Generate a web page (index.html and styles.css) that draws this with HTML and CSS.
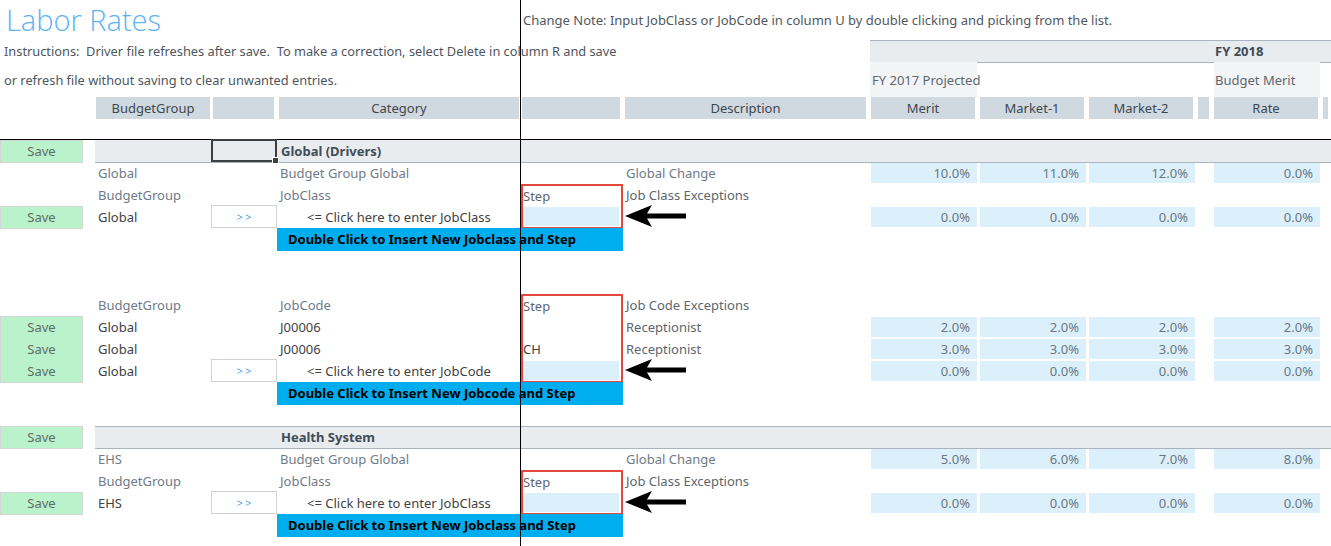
FILE: index.html
```html
<!DOCTYPE html>
<html>
<head>
  <title>Labor Rates</title>
  <link rel="stylesheet" href="styles.css">
</head>
<body>
  <div class="sheet">
    <div class="row r-title">
      <h1 class="title">Labor Rates</h1>
      <div class="change-note">Change Note: Input JobClass or JobCode in column U by double clicking and picking from the list.</div>
    </div>

    <div class="row">
      <div class="note">Instructions:&nbsp; Driver file refreshes after save.&nbsp; To make a correction, select Delete in column R and save</div>
      <div class="fy-band"></div>
      <div class="c-rate fy">FY 2018</div>
    </div>

    <div class="row r-sub">
      <div class="note">or refresh file without saving to clear unwanted entries.</div>
      <div class="c-merit sub-cell">FY 2017 Projected</div>
      <div class="c-rate sub-cell">Budget Merit</div>
    </div>

    <div class="row head">
      <div class="c-grp hd">BudgetGroup</div>
      <div class="c-go hd"></div>
      <div class="c-cat hd">Category</div>
      <div class="c-step hd"></div>
      <div class="c-desc hd">Description</div>
      <div class="c-merit hd">Merit</div>
      <div class="c-m1 hd">Market-1</div>
      <div class="c-m2 hd">Market-2</div>
      <div class="c-gap hd"></div>
      <div class="c-rate hd">Rate</div>
      <div class="c-end hd"></div>
    </div>
    <div class="freeze-h"></div>

    <!-- Global (Drivers) -->
    <div class="row">
      <div class="c-save save">Save</div>
      <div class="band"></div>
      <div class="c-go sel"></div>
      <div class="c-cat band-title">Global (Drivers)</div>
    </div>
    <div class="row">
      <div class="c-grp txt lt">Global</div>
      <div class="c-cat txt lt">Budget Group Global</div>
      <div class="c-desc txt lt">Global Change</div>
      <div class="c-merit pct">10.0%</div>
      <div class="c-m1 pct">11.0%</div>
      <div class="c-m2 pct">12.0%</div>
      <div class="c-rate pct">0.0%</div>
    </div>
    <div class="row">
      <div class="c-grp txt lt">BudgetGroup</div>
      <div class="c-cat txt lt">JobClass</div>
      <div class="c-step step top">Step</div>
      <div class="c-desc txt md">Job Class Exceptions</div>
    </div>
    <div class="row">
      <div class="c-save save">Save</div>
      <div class="c-grp txt dk">Global</div>
      <div class="c-go go">&gt; &gt;</div>
      <div class="c-cat txt dk enter">&lt;= Click here to enter JobClass</div>
      <div class="c-step step bot"><div class="step-input"></div></div>
      <div class="c-desc"><svg class="arrow" width="64" height="24" viewBox="0 0 64 24"><path d="M2 12 L29 1 L24 9.5 L63 9.5 L63 14.5 L24 14.5 L29 23 Z" fill="#000"/></svg></div>
      <div class="c-merit pct">0.0%</div>
      <div class="c-m1 pct">0.0%</div>
      <div class="c-m2 pct">0.0%</div>
      <div class="c-rate pct">0.0%</div>
    </div>
    <div class="row">
      <div class="insert">Double Click to Insert New Jobclass and Step</div>
    </div>
    <div class="row"></div>
    <div class="row"></div>

    <!-- Job code exceptions -->
    <div class="row">
      <div class="c-grp txt lt">BudgetGroup</div>
      <div class="c-cat txt lt">JobCode</div>
      <div class="c-step step top">Step</div>
      <div class="c-desc txt md">Job Code Exceptions</div>
    </div>
    <div class="row">
      <div class="c-save save">Save</div>
      <div class="c-grp txt dk">Global</div>
      <div class="c-cat txt dk">J00006</div>
      <div class="c-step step"></div>
      <div class="c-desc txt md">Receptionist</div>
      <div class="c-merit pct">2.0%</div>
      <div class="c-m1 pct">2.0%</div>
      <div class="c-m2 pct">2.0%</div>
      <div class="c-rate pct">2.0%</div>
    </div>
    <div class="row">
      <div class="c-save save next">Save</div>
      <div class="c-grp txt dk">Global</div>
      <div class="c-cat txt dk">J00006</div>
      <div class="c-step step dk">CH</div>
      <div class="c-desc txt md">Receptionist</div>
      <div class="c-merit pct">3.0%</div>
      <div class="c-m1 pct">3.0%</div>
      <div class="c-m2 pct">3.0%</div>
      <div class="c-rate pct">3.0%</div>
    </div>
    <div class="row">
      <div class="c-save save next">Save</div>
      <div class="c-grp txt dk">Global</div>
      <div class="c-go go">&gt; &gt;</div>
      <div class="c-cat txt dk enter">&lt;= Click here to enter JobCode</div>
      <div class="c-step step bot"><div class="step-input"></div></div>
      <div class="c-desc"><svg class="arrow" width="64" height="24" viewBox="0 0 64 24"><path d="M2 12 L29 1 L24 9.5 L63 9.5 L63 14.5 L24 14.5 L29 23 Z" fill="#000"/></svg></div>
      <div class="c-merit pct">0.0%</div>
      <div class="c-m1 pct">0.0%</div>
      <div class="c-m2 pct">0.0%</div>
      <div class="c-rate pct">0.0%</div>
    </div>
    <div class="row">
      <div class="insert">Double Click to Insert New Jobcode and Step</div>
    </div>
    <div class="row"></div>

    <!-- Health System -->
    <div class="row">
      <div class="c-save save">Save</div>
      <div class="band band-top"></div>
      <div class="c-cat band-title">Health System</div>
    </div>
    <div class="row">
      <div class="c-grp txt lt">EHS</div>
      <div class="c-cat txt lt">Budget Group Global</div>
      <div class="c-desc txt lt">Global Change</div>
      <div class="c-merit pct">5.0%</div>
      <div class="c-m1 pct">6.0%</div>
      <div class="c-m2 pct">7.0%</div>
      <div class="c-rate pct">8.0%</div>
    </div>
    <div class="row">
      <div class="c-grp txt lt">BudgetGroup</div>
      <div class="c-cat txt lt">JobClass</div>
      <div class="c-step step top">Step</div>
      <div class="c-desc txt md">Job Class Exceptions</div>
    </div>
    <div class="row">
      <div class="c-save save">Save</div>
      <div class="c-grp txt dk">EHS</div>
      <div class="c-go go">&gt; &gt;</div>
      <div class="c-cat txt dk enter">&lt;= Click here to enter JobClass</div>
      <div class="c-step step bot"><div class="step-input"></div></div>
      <div class="c-desc"><svg class="arrow" width="64" height="24" viewBox="0 0 64 24"><path d="M2 12 L29 1 L24 9.5 L63 9.5 L63 14.5 L24 14.5 L29 23 Z" fill="#000"/></svg></div>
      <div class="c-merit pct">0.0%</div>
      <div class="c-m1 pct">0.0%</div>
      <div class="c-m2 pct">0.0%</div>
      <div class="c-rate pct">0.0%</div>
    </div>
    <div class="row">
      <div class="insert">Double Click to Insert New Jobclass and Step</div>
    </div>
    <div class="row"></div>

    <div class="freeze-v"></div>
  </div>
</body>
</html>
```

FILE: styles.css
```css
body {
  margin: 0;
  font-family: "Noto Sans", "Open Sans", sans-serif;
  font-size: 13px;
  color: #4f5962;
  background-color: #fff;
}

.sheet {
  position: relative;
  width: 1331px;
  height: 546px;
  overflow: hidden;
}

/* frozen pane line, drawn over the cells */
.freeze-v {
  position: absolute;
  left: 520px;
  top: 0;
  bottom: 0;
  width: 1px;
  background-color: #000;
}

.freeze-h {
  height: 19px;
  border-bottom: 1px solid #000;
}

.row {
  display: grid;
  grid-template-columns: 83px 12px 116px 66px 243px 103px 246px 109px 109px 109px 16px 109px 1fr;
  height: 22px;
  line-height: 23px;
}

.row > * {
  grid-row: 1;
  white-space: nowrap;
  min-width: 0;
  box-sizing: border-box;
}

/* columns */
.c-save { grid-column: 1; }
.c-grp { grid-column: 3; }
.c-go { grid-column: 4; }
.c-cat { grid-column: 5; }
.c-step { grid-column: 6; }
.c-desc { grid-column: 7; }
.c-merit { grid-column: 8; }
.c-m1 { grid-column: 9; }
.c-m2 { grid-column: 10; }
.c-gap { grid-column: 11; }
.c-rate { grid-column: 12; }
.c-end { grid-column: 13; }

/* top area */
.r-title {
  height: 40px;
  line-height: 40px;
}

.title {
  grid-column: 1 / 6;
  margin: 0;
  padding-left: 6px;
  font-family: "Open Sans", "Noto Sans", sans-serif;
  font-size: 29px;
  font-weight: 300;
  color: #5cb3f5;
}

.change-note {
  grid-column: 6 / -1;
  padding-left: 3px;
  color: #50585f;
}

.note {
  grid-column: 1 / 8;
  padding-left: 4px;
  font-size: 12.8px;
  color: #4d5660;
}

.fy-band {
  grid-column: 8 / -1;
  margin-left: 1px;
  background-color: #e8ecef;
  border-top: 1px solid #aab4be;
  border-bottom: 1px solid #aab4be;
}

.fy {
  font-weight: bold;
  padding-left: 3px;
  color: #414b55;
}

.r-sub {
  height: 35px;
  line-height: 36px;
}

.sub-cell {
  background-color: #f3f4f5;
  color: #5d6770;
  margin: 0 1px 0 1px;
  padding-left: 2px;
}

.c-rate.sub-cell {
  margin-left: 2px;
  padding-left: 1px;
}

/* header row */
.head {
  height: 23px;
}

.hd {
  background-color: #d0d9df;
  height: 22px;
  margin: 0 3px 0 2px;
  text-align: center;
  color: #3d4751;
}

.c-grp.hd {
  margin: 0 1px 0 1px;
}

.c-cat.hd {
  margin-right: 1px;
}

/* cells */
.txt {
  padding-left: 3px;
}

.lt { color: #6f7b87; }
.md { color: #5d6770; }
.dk { color: #3e4246; }

.enter {
  padding-left: 30px;
}

.save {
  background-color: #b9f2cb;
  border: 1px solid #d3d6d4;
  text-align: center;
  line-height: 21px;
  color: #5d6d64;
}

.save.next {
  border-top: none;
  line-height: 22px;
}

.band {
  grid-column: 3 / -1;
  background-color: #e8ecef;
  border-bottom: 1px solid #aab4be;
}

.band-top {
  border-top: 1px solid #aab4be;
}

.band-title {
  font-weight: bold;
  color: #414b55;
  padding-left: 4px;
}

.sel {
  position: relative;
  border: 2px solid #3e3e3e;
  height: 23px;
  margin-top: -1px;
}

.sel::after {
  content: "";
  position: absolute;
  right: -4px;
  bottom: -4px;
  width: 5px;
  height: 5px;
  background-color: #3e3e3e;
  border: 1px solid #fff;
}

.go {
  border: 1px solid #cdd3d8;
  background-color: #fff;
  height: 23px;
  margin-top: -1px;
  text-align: center;
  line-height: 22px;
  font-size: 10.5px;
  color: #3a9fe2;
}

.pct {
  background-color: #dcf0fc;
  margin: 1px 1px 2px 2px;
  padding-right: 7px;
  text-align: right;
  line-height: 20px;
  color: #6a7682;
}

/* red outlined Step box */
.step {
  margin-left: 1px;
  border-left: 2px solid #e5473d;
  border-right: 2px solid #e5473d;
  color: #5d6770;
}

.step.dk {
  color: #3e4246;
}

.step.top {
  border-top: 2px solid #e5473d;
  line-height: 20px;
}

.step.bot {
  border-bottom: 2px solid #e5473d;
  height: 23px;
}

.step-input {
  background-color: #dcf0fb;
  height: 19px;
  margin: 1px 2px 0 0;
}

.arrow {
  display: block;
  margin: -2px 0 0 0;
}

.insert {
  grid-column: 5 / 7;
  background-color: #00adef;
  color: #000;
  font-weight: bold;
  padding-left: 11px;
}
```
